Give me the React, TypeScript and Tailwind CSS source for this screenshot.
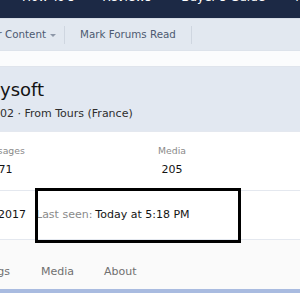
export default function App() {
  return (
    <div
      className="relative w-[300px] h-[300px] overflow-hidden bg-white"
      style={{ fontFamily: '"DejaVu Sans", Verdana, sans-serif' }}
    >
      {/* top nav, mostly scrolled out of view */}
      <div className="h-[18px] bg-[#1c2945] overflow-hidden">
        <div className="mt-[-11px] flex pl-[22px] gap-[28px] text-[12px] leading-[16px] text-white whitespace-nowrap">
          <span>How To's</span>
          <span>Reviews</span>
          <span className="ml-[2px]">Buyer's Guide</span>
          <span className="ml-[2px]">Forums</span>
        </div>
      </div>

      {/* sub nav */}
      <div className="h-[32px] bg-[#e2e8f0] border-t border-[#d5dce6] flex items-center text-[10.3px] text-[#4d5a71] whitespace-nowrap">
        <div className="w-[56px] flex justify-end items-center shrink-0">
          <span className="shrink-0">Your Content</span>
          <span className="ml-[4px] mt-[1px] w-0 h-0 border-l-[3px] border-r-[3px] border-t-[3px] border-l-transparent border-r-transparent border-t-[#8d97a8]" />
        </div>
        <span className="ml-[8px] w-px h-[18px] bg-[#cfd6e0]" />
        <span className="px-[15px]">Mark Forums Read</span>
        <span className="w-px h-[18px] bg-[#cfd6e0]" />
      </div>

      <div className="h-[16px] bg-[#fbfcfd] border-t border-[#dde3eb]" />

      {/* profile header */}
      <div className="h-[65px] bg-[#e2e8f1] border-t border-[#dfe4ec] pt-[14px] whitespace-nowrap">
        <div className="text-[18px] leading-[18px] text-[#141414]">ysoft</div>
        <div className="mt-[8px] text-[11px] leading-[14px] text-[#2e2e2e]">02 · From Tours (France)</div>
      </div>

      {/* stats */}
      <div className="h-[59px] border-t border-[#e4e8ef] flex -ml-[83px] pt-[13px] whitespace-nowrap">
        <div className="w-[170px] text-center">
          <div className="text-[9.3px] leading-[12px] text-[#8a8a8a]">Messages</div>
          <div className="mt-[6px] text-[11px] leading-[14px] text-[#141414]">971</div>
        </div>
        <div className="w-[170px] text-center">
          <div className="text-[9.3px] leading-[12px] text-[#8a8a8a]">Media</div>
          <div className="mt-[6px] text-[11px] leading-[14px] text-[#141414]">205</div>
        </div>
      </div>

      {/* joined / last seen */}
      <div className="h-[49px] border-t border-[#e4e8ef] flex items-center text-[11px] whitespace-nowrap">
        <div className="w-[26px] flex justify-end shrink-0">
          <span className="shrink-0 text-[#8a8a8a]">
            Joined: <span className="text-[#141414]">Mar 7, 2017</span>
          </span>
        </div>
        <span className="ml-[10px] text-[#8a8a8a]">Last seen:</span>
        <span className="ml-[3px] text-[#141414]">Today at 5:18 PM</span>
      </div>

      {/* tabs */}
      <div className="h-[50px] border-t border-[#e4e8ef] bg-[#fafafa] flex items-center pt-[15px] text-[11px] text-[#707070] whitespace-nowrap">
        <div className="w-[10px] flex justify-end shrink-0">
          <span className="shrink-0">Postings</span>
        </div>
        <span className="ml-[31px]">Media</span>
        <span className="ml-[30px]">About</span>
      </div>
      <div className="h-[4px] bg-[#a9bbe0]" />

      {/* annotation box */}
      <div className="absolute left-[35px] top-[188px] w-[206px] h-[55px] border-[3px] border-black" />
    </div>
  );
}
